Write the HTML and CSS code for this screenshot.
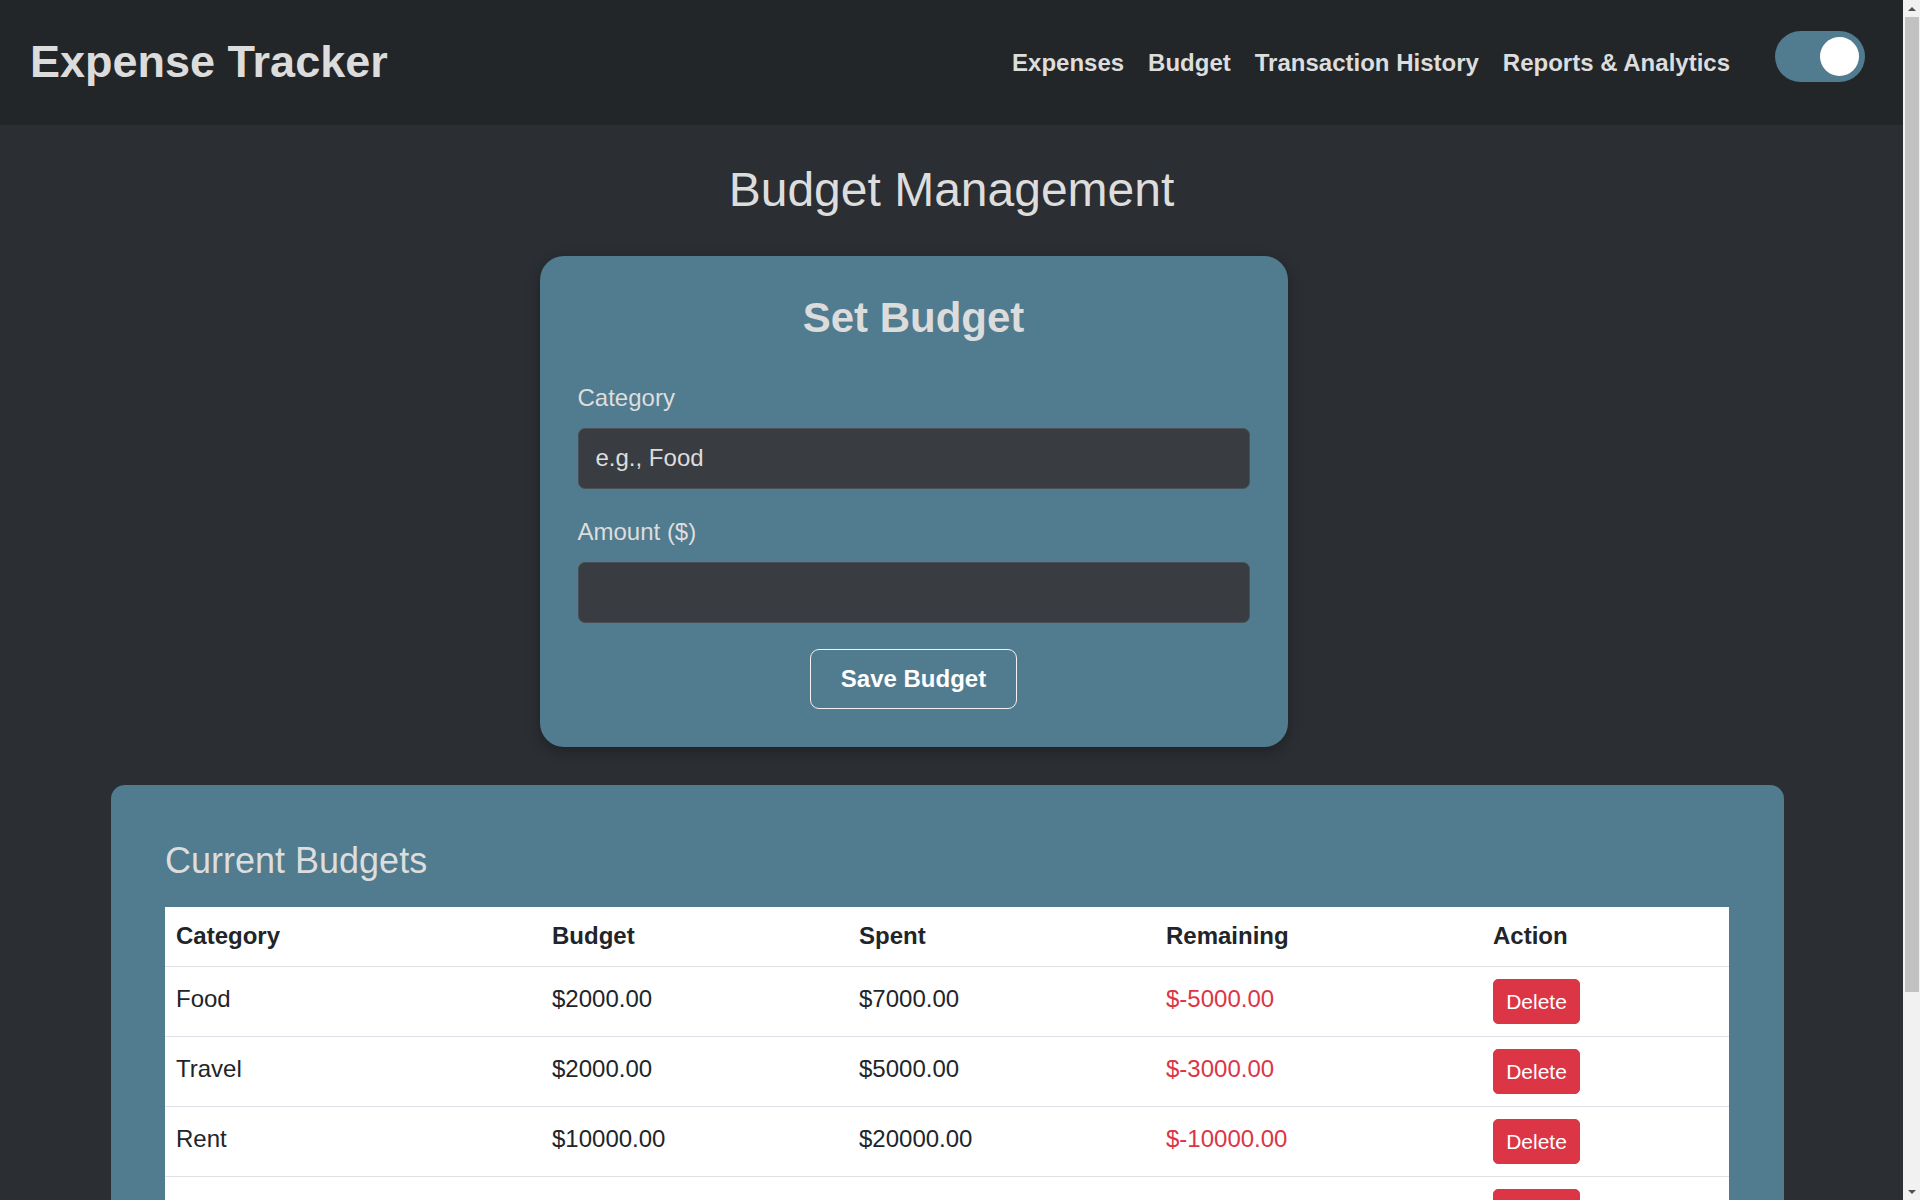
FILE: index.html
```html
<!DOCTYPE html>
<html lang="en">
<head>
<meta charset="utf-8">
<title>Expense Tracker - Budget</title>
<link rel="stylesheet" href="styles.css">
</head>
<body>
<div class="app">
  <header class="topbar">
    <div class="brand">Expense Tracker</div>
    <div class="topbar-right">
      <nav class="nav">
        <a href="#" class="nav-link">Expenses</a>
        <a href="#" class="nav-link">Budget</a>
        <a href="#" class="nav-link">Transaction History</a>
        <a href="#" class="nav-link">Reports &amp; Analytics</a>
      </nav>
      <label class="toggle"><span class="knob"></span></label>
    </div>
  </header>

  <main class="page">
    <h1 class="page-title">Budget Management</h1>

    <div class="form-wrap">
      <form class="budget-card">
        <h2 class="card-title">Set Budget</h2>
        <div class="field">
          <label class="field-label">Category</label>
          <input class="field-input" type="text" placeholder="e.g., Food">
        </div>
        <div class="field">
          <label class="field-label">Amount ($)</label>
          <input class="field-input" type="text">
        </div>
        <div class="actions">
          <button type="button" class="save-btn">Save Budget</button>
        </div>
      </form>
    </div>

    <section class="list-card">
      <h2 class="list-title">Current Budgets</h2>
      <table class="budget-table">
        <thead>
          <tr>
            <th class="col-cat">Category</th>
            <th class="col-budget">Budget</th>
            <th class="col-spent">Spent</th>
            <th class="col-rem">Remaining</th>
            <th class="col-act">Action</th>
          </tr>
        </thead>
        <tbody>
          <tr>
            <td>Food</td><td>$2000.00</td><td>$7000.00</td>
            <td class="neg">$-5000.00</td>
            <td><button type="button" class="del-btn">Delete</button></td>
          </tr>
          <tr>
            <td>Travel</td><td>$2000.00</td><td>$5000.00</td>
            <td class="neg">$-3000.00</td>
            <td><button type="button" class="del-btn">Delete</button></td>
          </tr>
          <tr>
            <td>Rent</td><td>$10000.00</td><td>$20000.00</td>
            <td class="neg">$-10000.00</td>
            <td><button type="button" class="del-btn">Delete</button></td>
          </tr>
          <tr>
            <td>shopping</td><td>$1000.00</td><td>$3000.00</td>
            <td class="neg">$-2000.00</td>
            <td><button type="button" class="del-btn">Delete</button></td>
          </tr>
        </tbody>
      </table>
    </section>
  </main>
</div>

<div class="scrollbar" aria-hidden="true">
  <div class="sb-arrow sb-up"></div>
  <div class="sb-thumb"></div>
  <div class="sb-arrow sb-down"></div>
</div>
</body>
</html>
```

FILE: styles.css
```css
* { box-sizing: border-box; }

html, body {
  margin: 0;
  padding: 0;
}

body {
  background: #2b2e33;
  color: #dddddd;
  font-family: "Liberation Sans", Arial, sans-serif;
  font-size: 24px;
  line-height: 1.5;
}

.app {
  width: 1903px;
}

/* emulated classic browser scrollbar */
.scrollbar {
  position: fixed;
  top: 0;
  right: 0;
  width: 17px;
  height: 100vh;
  background: #f1f1f1;
  display: flex;
  flex-direction: column;
  align-items: stretch;
}

.sb-arrow {
  height: 17px;
  flex: none;
  display: flex;
  align-items: center;
  justify-content: center;
}

.sb-up::before {
  content: "";
  border-left: 4px solid transparent;
  border-right: 4px solid transparent;
  border-bottom: 4px solid #505050;
}

.sb-down::before {
  content: "";
  border-left: 4px solid transparent;
  border-right: 4px solid transparent;
  border-top: 4px solid #505050;
}

.sb-thumb {
  height: 975px;
  flex: none;
  margin: 0 1px 0 2px;
  background: #c1c1c1;
}

.sb-down {
  margin-top: auto;
}

.topbar {
  height: 125px;
  background: #222629;
  display: flex;
  align-items: center;
  justify-content: space-between;
  padding: 0 38px 0 30px;
}

.brand {
  font-size: 45px;
  font-weight: 700;
  color: #dcdcdc;
  line-height: 1.2;
  margin-top: -2px;
}

.topbar-right {
  display: flex;
  align-items: center;
  gap: 45px;
}

.nav {
  display: flex;
  gap: 24px;
}

.nav-link {
  color: #dddddd;
  font-weight: 700;
  font-size: 24px;
  text-decoration: none;
}

.toggle {
  width: 90px;
  height: 51px;
  border-radius: 26px;
  background: #517b8e;
  display: flex;
  align-items: center;
  justify-content: flex-end;
  padding-right: 6px;
  margin-bottom: 12px;
}

.knob {
  width: 39px;
  height: 39px;
  border-radius: 50%;
  background: #ffffff;
}

.page {
  padding: 0 0 40px;
}

.page-title {
  margin: 0;
  padding-top: 36px;
  text-align: center;
  font-size: 48px;
  font-weight: 400;
  line-height: 1.2;
  color: #dddddd;
  margin-bottom: 37px;
}

.form-wrap {
  padding-right: 76px;
}

.budget-card {
  width: 748px;
  margin: 0 auto;
  background: #517b8e;
  border-radius: 24px;
  padding: 37px 38px 38px;
  box-shadow: 0 4px 14px rgba(0, 0, 0, 0.3);
}

.card-title {
  margin: 0 0 40px;
  text-align: center;
  font-size: 42px;
  font-weight: 700;
  line-height: 1.2;
  color: #dcdcdc;
}

.field {
  display: flex;
  flex-direction: column;
}

.field + .field {
  margin-top: 28px;
}

.field-label {
  font-size: 24px;
  line-height: 29px;
  color: #dddddd;
  margin-bottom: 16px;
}

.field-input {
  height: 61px;
  background: #393d42;
  border: 1px solid #4b5056;
  border-radius: 7px;
  padding: 0 17px;
  font-family: "Liberation Sans", Arial, sans-serif;
  font-size: 24px;
  color: #dddddd;
  outline: none;
}

.field-input::placeholder {
  color: #dddddd;
  opacity: 1;
}

.actions {
  display: flex;
  justify-content: center;
  margin-top: 26px;
}

.save-btn {
  height: 60px;
  padding: 0 30px;
  background: transparent;
  border: 1px solid #f2f2f2;
  border-radius: 9px;
  color: #ffffff;
  font-family: "Liberation Sans", Arial, sans-serif;
  font-size: 24px;
  font-weight: 700;
}

.list-card {
  margin: 38px 119px 0 111px;
  background: #517b8e;
  border-radius: 14px;
  padding: 54px 55px 54px 54px;
}

.list-title {
  margin: 0 0 25px;
  font-size: 36px;
  font-weight: 400;
  line-height: 1.2;
  color: #dddddd;
}

.budget-table {
  width: 100%;
  border-collapse: collapse;
  background: #ffffff;
  color: #212529;
}

.budget-table th,
.budget-table td {
  text-align: left;
  vertical-align: top;
  padding: 12px 11px 12px;
  line-height: 39px;
  border-bottom: 1px solid #dee2e6;
  font-size: 24px;
}

.budget-table th {
  font-weight: 700;
  line-height: 36px;
  padding-top: 11px;
  padding-bottom: 12px;
}

.col-cat { width: 376px; }
.col-budget { width: 307px; }
.col-spent { width: 307px; }
.col-rem { width: 327px; }

.neg {
  color: #dc3545;
}

.del-btn {
  display: block;
  height: 45px;
  width: 87px;
  padding: 0;
  background: #dc3545;
  border: 1px solid #dc3545;
  border-radius: 5px;
  color: #ffffff;
  font-family: "Liberation Sans", Arial, sans-serif;
  font-size: 21px;
  line-height: 43px;
  text-align: center;
}
```
